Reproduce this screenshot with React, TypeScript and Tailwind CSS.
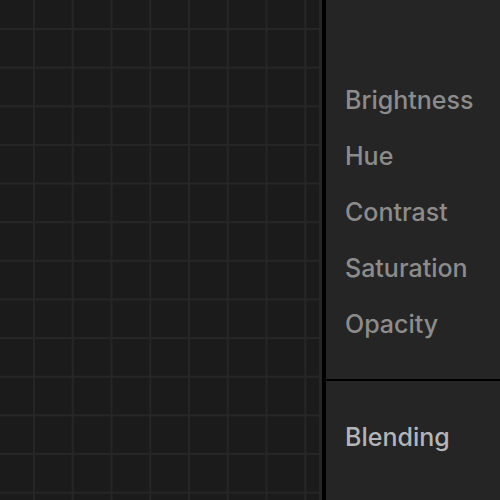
import React from 'react';

const adjustments = ['Brightness', 'Hue', 'Contrast', 'Saturation', 'Opacity'];

export default function App() {
  return (
    <div className="flex h-[500px] w-[500px] overflow-hidden bg-[#1b1b1b] font-['Inter',sans-serif]">
      {/* canvas grid */}
      <div className="h-full w-[319px] bg-[#1b1b1b] bg-[linear-gradient(to_right,#262626_2px,transparent_2px),linear-gradient(to_bottom,#262626_2px,transparent_2px)] bg-[size:38.75px_38.65px] bg-[position:33px_28px]" />
      <div className="h-full w-[3px] bg-[#262626]" />
      <div className="h-full w-[4px] bg-black" />

      {/* side panel */}
      <div className="flex h-full flex-1 flex-col bg-[#252525]">
        <div className="flex flex-col pl-[19px] pt-[73px] h-[379px]">
          {adjustments.map((label) => (
            <div key={label} className="flex h-[56px] items-center text-[25px] font-medium text-[#8c8c8c]">
              {label}
            </div>
          ))}
        </div>
        <div className="h-[2px] bg-black" />
        <div className="flex h-[56px] items-center pl-[19px] mt-[29px] text-[25px] font-medium text-[#b2b6b8]">
          Blending
        </div>
      </div>
    </div>
  );
}
